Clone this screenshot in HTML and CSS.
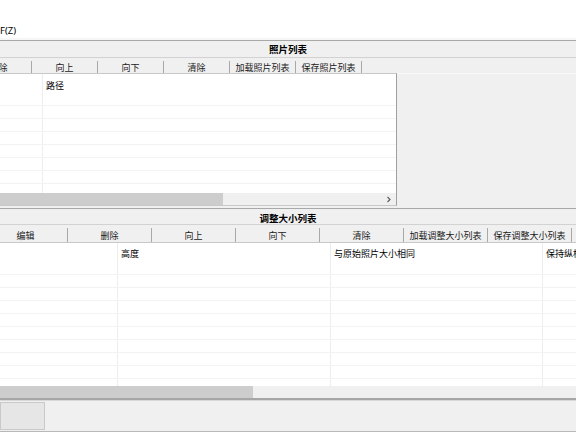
FILE: index.html
```html
<!DOCTYPE html>
<html lang="zh-CN">
<head>
<meta charset="utf-8">
<title>照片列表</title>
<link rel="stylesheet" href="styles.css">
</head>
<body>
<div class="app">
  <div class="menubar"><span class="menu-item">F(Z)</span></div>

  <section class="panel panel-photos">
    <div class="title">照片列表</div>
    <div class="toolbar tb-photos">
      <div class="btn">删除</div>
      <div class="btn">向上</div>
      <div class="btn">向下</div>
      <div class="btn">清除</div>
      <div class="btn">加载照片列表</div>
      <div class="btn">保存照片列表</div>
    </div>
    <div class="listarea">
      <div class="list list-photos">
        <div class="row head"><div class="c p1"></div><div class="c p2">路径</div></div>
        <div class="rows">
          <div class="row"><div class="c p1"></div><div class="c p2"></div></div>
          <div class="row"><div class="c p1"></div><div class="c p2"></div></div>
          <div class="row"><div class="c p1"></div><div class="c p2"></div></div>
          <div class="row"><div class="c p1"></div><div class="c p2"></div></div>
          <div class="row"><div class="c p1"></div><div class="c p2"></div></div>
          <div class="row"><div class="c p1"></div><div class="c p2"></div></div>
          <div class="row"><div class="c p1"></div><div class="c p2"></div></div>
        </div>
        <div class="hscroll">
          <div class="thumb" style="width:223px"></div>
          <div class="arrow">
            <svg width="6" height="7" viewBox="0 0 6 7"><path d="M1.5 1 L4 3.5 L1.5 6" fill="none" stroke="#606060" stroke-width="1.2"/></svg>
          </div>
        </div>
      </div>
      <div class="side"></div>
    </div>
  </section>

  <section class="panel panel-resize">
    <div class="title">调整大小列表</div>
    <div class="toolbar tb-resize">
      <div class="btn">编辑</div>
      <div class="btn">删除</div>
      <div class="btn">向上</div>
      <div class="btn">向下</div>
      <div class="btn">清除</div>
      <div class="btn">加载调整大小列表</div>
      <div class="btn">保存调整大小列表</div>
    </div>
    <div class="list list-resize">
      <div class="row head">
        <div class="c r1"></div><div class="c r2">高度</div><div class="c r3">与原始照片大小相同</div><div class="c r4">保持纵横比</div>
      </div>
      <div class="rows">
        <div class="row"><div class="c r1"></div><div class="c r2"></div><div class="c r3"></div><div class="c r4"></div></div>
        <div class="row"><div class="c r1"></div><div class="c r2"></div><div class="c r3"></div><div class="c r4"></div></div>
        <div class="row"><div class="c r1"></div><div class="c r2"></div><div class="c r3"></div><div class="c r4"></div></div>
        <div class="row"><div class="c r1"></div><div class="c r2"></div><div class="c r3"></div><div class="c r4"></div></div>
        <div class="row"><div class="c r1"></div><div class="c r2"></div><div class="c r3"></div><div class="c r4"></div></div>
        <div class="row"><div class="c r1"></div><div class="c r2"></div><div class="c r3"></div><div class="c r4"></div></div>
        <div class="row"><div class="c r1"></div><div class="c r2"></div><div class="c r3"></div><div class="c r4"></div></div>
        <div class="row"><div class="c r1"></div><div class="c r2"></div><div class="c r3"></div><div class="c r4"></div></div>
        <div class="row"><div class="c r1"></div><div class="c r2"></div><div class="c r3"></div><div class="c r4"></div></div>
      </div>
      <div class="hscroll">
        <div class="thumb" style="width:253px"></div>
      </div>
    </div>
  </section>

  <div class="statusbar">
    <div class="sbtn"></div>
  </div>
</div>
</body>
</html>
```

FILE: styles.css
```css
html, body {
  margin: 0;
  padding: 0;
}
body {
  width: 576px;
  height: 432px;
  overflow: hidden;
  background: #f0f0f0;
  font-family: "Noto Sans CJK SC", "Noto Sans", sans-serif;
  font-size: 9px;
  color: #000;
}
.app {
  width: 576px;
  height: 432px;
  display: flex;
  flex-direction: column;
  overflow: hidden;
}
.menubar {
  flex: none;
  height: 40px;
  background: #fff;
  border-bottom: 2px solid #f6f6f6;
  box-sizing: border-box;
  display: flex;
  align-items: flex-end;
}
.menu-item {
  line-height: 12px;
  padding-bottom: 1px;
  font-family: "Noto Sans", "Noto Sans CJK SC", sans-serif;
  font-size: 9.5px;
}
.panel {
  flex: none;
  display: flex;
  flex-direction: column;
}
.title {
  border-top: 1px solid #a8a8a8;
  border-bottom: 1px solid #d2d2d2;
  text-align: center;
  font-weight: bold;
  font-size: 9.5px;
  background: #f0f0f0;
  overflow: hidden;
}
.panel-photos .title {
  height: 16px;
  line-height: 17px;
}
.panel-resize {
  margin-top: 2px;
}
.panel-resize .title {
  height: 15px;
  line-height: 18px;
}
.toolbar {
  display: flex;
  align-items: center;
  overflow: hidden;
  white-space: nowrap;
}
.tb-photos {
  height: 15px;
}
.tb-resize {
  height: 17px;
  align-items: flex-end;
}
.btn {
  flex: none;
  box-sizing: border-box;
  height: 12px;
  line-height: 13px;
  text-align: center;
  border-right: 1px solid #a9a9a9;
  color: #1a1a1a;
}
.tb-photos .btn {
  margin-top: 2px;
}
.tb-resize .btn {
  height: 14px;
  line-height: 15px;
}
.tb-photos {
  margin-left: -34px;
}
.tb-photos .btn {
  width: 66px;
}
.tb-resize {
  margin-left: -16px;
}
.tb-resize .btn {
  width: 84px;
}
.listarea {
  display: flex;
  height: 133px;
}
.list {
  background: #fff;
  display: flex;
  flex-direction: column;
  box-sizing: border-box;
  overflow: hidden;
}
.list-photos {
  width: 397px;
  border-top: 1px solid #c8c8c8;
  border-right: 1px solid #a0a0a0;
  border-bottom: 1px solid #c8c8c8;
}
.side {
  flex: 1;
  border-top: 1px solid #f8f8f8;
  background: #f0f0f0;
}
.row {
  display: flex;
  flex: none;
  height: 13px;
  box-sizing: border-box;
  border-bottom: 1px solid #f3f3f3;
}
.row.head {
  height: 31px;
  border-bottom: none;
}
.head .c {
  padding-top: 6px;
  padding-left: 3px;
  line-height: 12px;
  white-space: nowrap;
  overflow: hidden;
}
.c {
  box-sizing: border-box;
  border-right: 1px solid #ededed;
  flex: none;
}
.rows {
  flex: 1;
  overflow: hidden;
  border-top: 1px solid #f3f3f3;
}
.p1 { width: 43px; }
.p2 { flex: 1; border-right: none; }
.list-resize {
  height: 156px;
  border-top: 1px solid #c8c8c8;
}
.list-resize .head .c {
  padding-top: 5px;
}
.r1 { width: 118px; }
.r2 { width: 213px; }
.r3 { width: 212px; }
.r4 { flex: 1; border-right: none; }
.hscroll {
  flex: none;
  height: 12px;
  background: #f0f0f0;
  display: flex;
  align-items: stretch;
  position: relative;
}
.thumb {
  background: #cdcdcd;
  flex: none;
}
.arrow {
  position: absolute;
  right: 3px;
  top: 0;
  bottom: 0;
  width: 8px;
  display: flex;
  align-items: center;
  justify-content: center;
}
.statusbar {
  flex: 1;
  border-top: 2px solid #a6a6a6;
  box-shadow: inset 0 1px 0 #d8d8d8;
  border-bottom: 1px solid #b8b8b8;
  background: #f0f0f0;
  padding: 2px 0 1px 0;
  display: flex;
}
.sbtn {
  width: 45px;
  box-sizing: border-box;
  border: 1px solid #c9c9c9;
  background: #e6e6e6;
}
```
